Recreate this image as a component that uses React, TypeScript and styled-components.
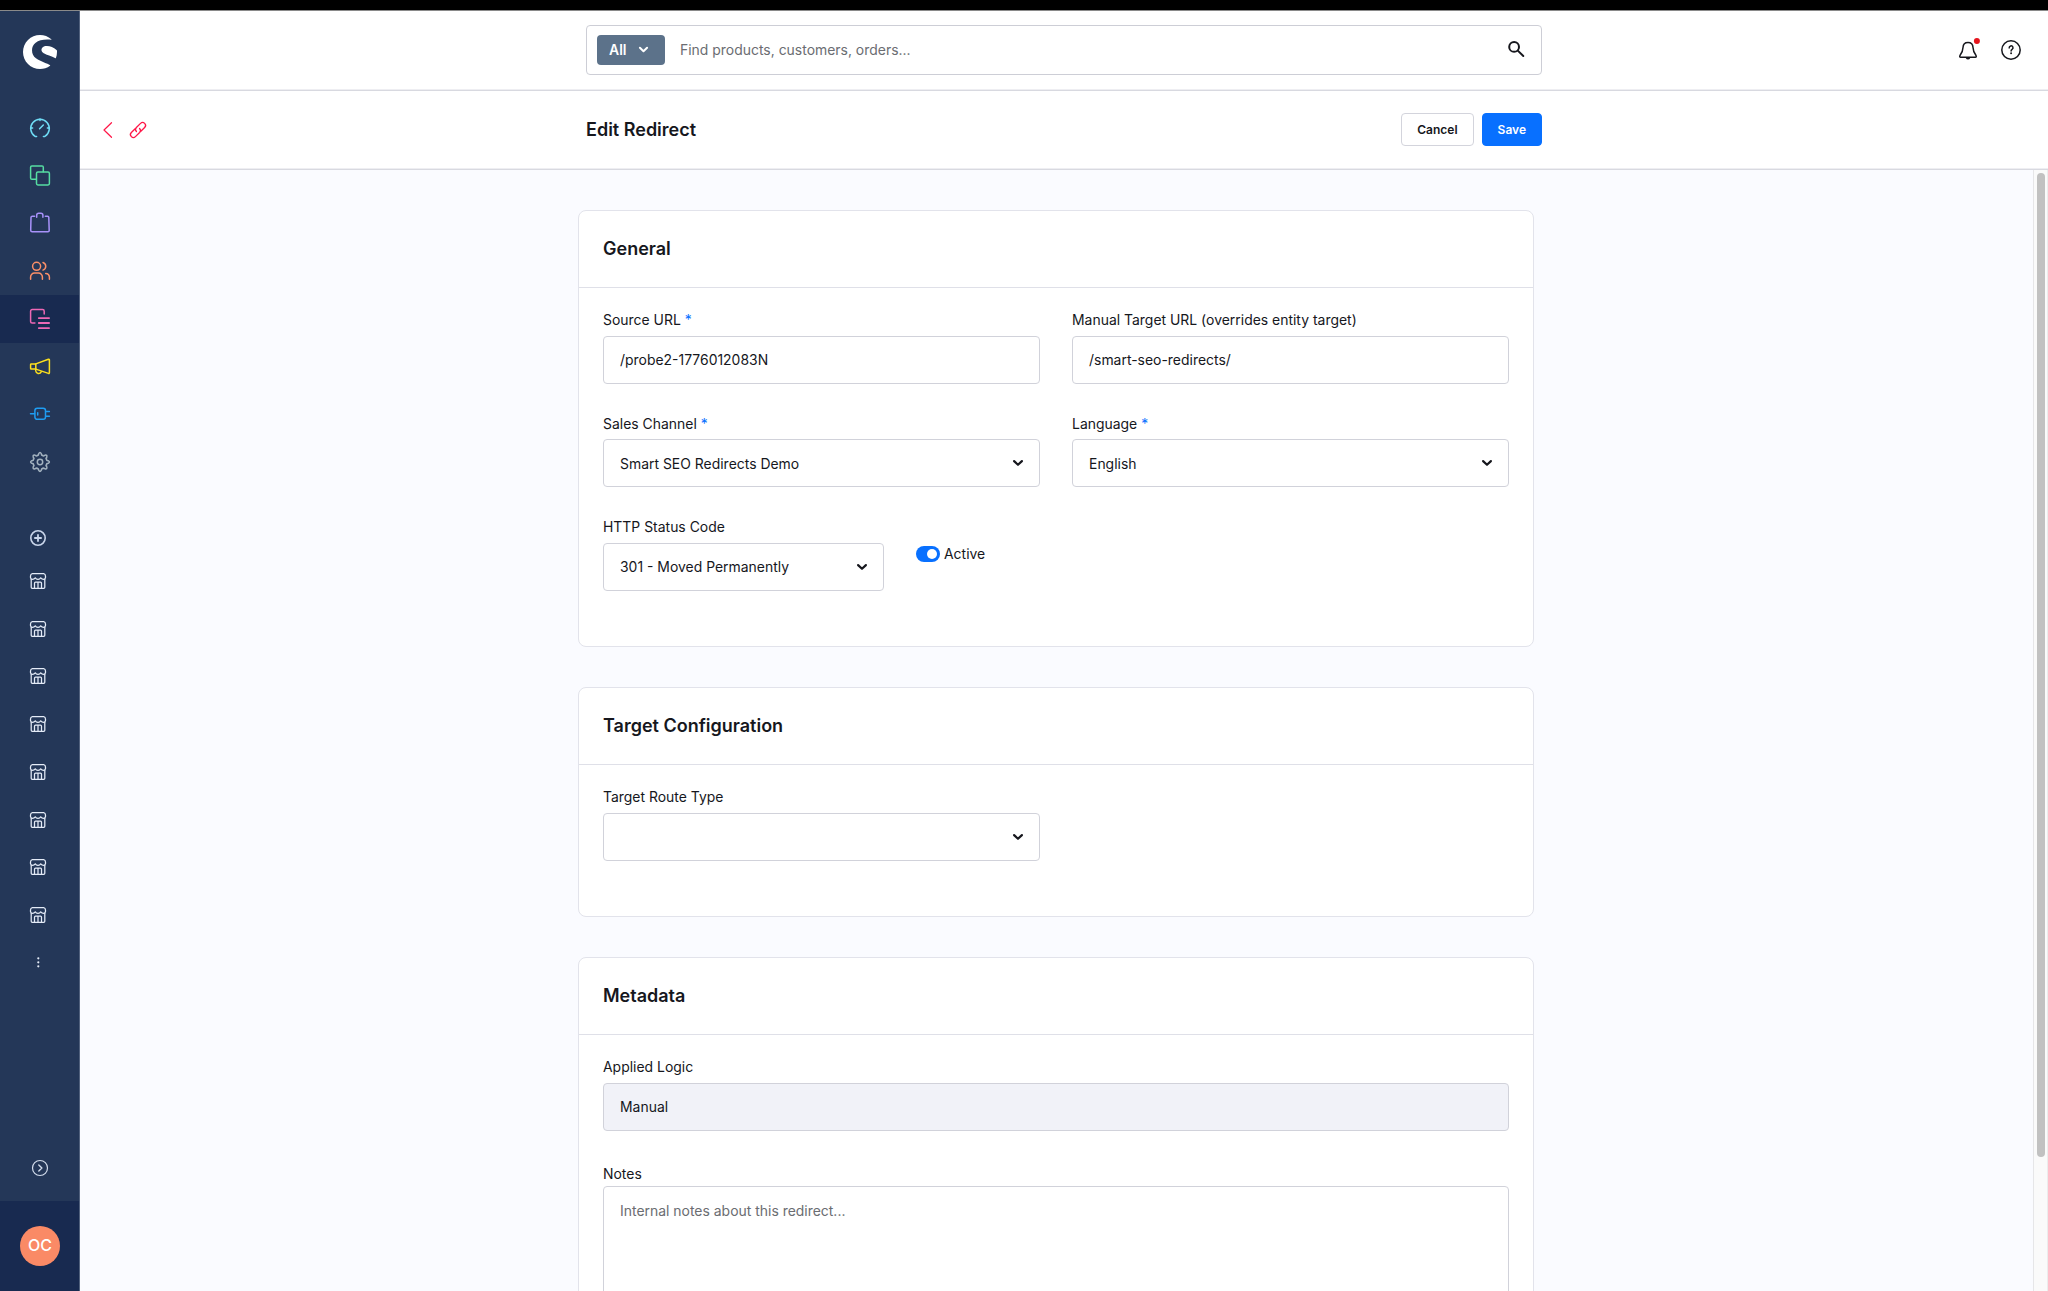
import React from 'react';
import styled, { createGlobalStyle } from 'styled-components';
import { SiShopware } from 'react-icons/si';

const GlobalStyle = createGlobalStyle`
  *, *::before, *::after { box-sizing: border-box; }
  body {
    margin: 0;
    background: #fff;
    color: #16171d;
    font-family: Inter, "Liberation Sans", sans-serif;
    font-size: 13.95px;
    overflow: hidden;
    -webkit-font-smoothing: antialiased;
  }
  button, input, textarea { font: inherit; color: inherit; }
`;

const Screen = styled.div`
  display: flex;
  flex-direction: column;
  width: 2048px;
  height: 1291px;
  border-top: 10px solid #000;
  overflow: hidden;
`;

const Shell = styled.div`
  flex: 1;
  min-height: 0;
  display: flex;
  border-top: 1px solid #8a8a8a;
`;

const Sidebar = styled.aside`
  width: 80px;
  flex: none;
  display: flex;
  flex-direction: column;
  background: #243758;
  border-right: 1px solid #51617d;
`;

const Brand = styled.div`
  height: 93.1px;
  padding: 23.5px 0 0 23px;
  color: #fff;
  line-height: 0;
`;

const NavList = styled.nav`
  display: flex;
  flex-direction: column;
`;

const NavItem = styled.a<{ $color: string; $active?: boolean }>`
  height: 47.75px;
  padding: 13.9px 0 0 30px;
  line-height: 0;
  color: ${(p) => p.$color};
  background: ${(p) => (p.$active ? '#182a50' : 'transparent')};
`;

const ChannelList = styled.div`
  display: flex;
  flex-direction: column;
  padding: 43.8px 0 0 30px;
  color: #e4ebf7;
  line-height: 0;
`;

const ChannelHead = styled.div`
  height: 43px;
  color: #c9d5ea;
`;

const ChannelItem = styled.div`
  height: 47.75px;
`;

const Expand = styled.div`
  margin-top: auto;
  height: 41px;
  padding-left: 32px;
  color: #d3dcec;
  line-height: 0;
`;

const UserPanel = styled.div`
  height: 90px;
  flex: none;
  display: flex;
  align-items: center;
  justify-content: center;
  padding-left: 1px;
  background: #182a50;
`;

const Avatar = styled.div`
  width: 40px;
  height: 40px;
  border-radius: 50%;
  display: flex;
  align-items: center;
  justify-content: center;
  background: #fa8a66;
  color: #fff;
  font-size: 16px;
  font-weight: 500;
  line-height: 38px;
  padding-bottom: 2px;
`;

const Main = styled.main`
  flex: 1;
  min-width: 0;
  display: flex;
  flex-direction: column;
`;

const Bar = styled.header<{ $height: number }>`
  height: ${(p) => p.$height}px;
  flex: none;
  display: grid;
  grid-template-columns: 1fr 956px 1fr;
  align-items: center;
  background: #fff;
  border-bottom: 1px solid #d8d9e0;
  box-shadow: inset 0 -1px 0 #eeeef2;
`;

const SearchBox = styled.div`
  height: 50px;
  display: flex;
  align-items: center;
  margin-top: -2px;
  padding: 0 17px 0 10px;
  border: 1px solid #cdced6;
  border-radius: 4px;
`;

const SearchType = styled.button`
  width: 68px;
  height: 30px;
  display: flex;
  align-items: center;
  padding: 0 0 0 12px;
  border: 0;
  border-radius: 4px;
  background: #5c728a;
  color: #fff;
  font-weight: 600;
  gap: 12px;
`;

const SearchInput = styled.input`
  flex: 1;
  border: 0;
  outline: 0;
  padding: 0 0 0 15px;
  &::placeholder { color: #6b6d72; opacity: 1; }
`;

const SearchGlyph = styled.span`
  line-height: 0;
  padding-bottom: 1px;
`;

const Tools = styled.div`
  display: flex;
  justify-content: flex-end;
  align-items: center;
  gap: 23.5px;
  padding: 0 27px 1px 0;
  line-height: 0;
`;

const BackLinks = styled.div`
  display: flex;
  align-items: center;
  gap: 10.5px;
  padding: 0 0 1px 23px;
  color: #ff1748;
  line-height: 0;
`;

const TitleRow = styled.div`
  display: flex;
  align-items: center;
  gap: 8px;
  padding-bottom: 1px;
`;

const Title = styled.h2`
  flex: 1;
  margin: 0;
  padding-bottom: 1px;
  font-size: 18px;
  font-weight: 600;
`;

const Button = styled.button<{ $primary?: boolean }>`
  height: 33px;
  padding: 0 15px;
  border-radius: 4px;
  border: 1px solid ${(p) => (p.$primary ? '#0870ff' : '#d3d4dc')};
  background: ${(p) => (p.$primary ? '#0870ff' : '#fff')};
  color: ${(p) => (p.$primary ? '#fff' : '#16171d')};
  font-size: 12px;
  font-weight: 600;
`;

const Body = styled.div`
  flex: 1;
  min-height: 0;
  display: flex;
  background: #fafbff;
`;

const Content = styled.div`
  flex: 1;
  display: flex;
  flex-direction: column;
  align-items: center;
  gap: 40px;
  padding: 40px 1px 0 0;
  overflow: hidden;
`;

const Track = styled.div`
  width: 15px;
  flex: none;
  padding: 3px 0 0 3px;
  background: #fafafa;
  border-left: 1px solid #e6e6e8;
  border-right: 1px solid #ececec;
`;

const Thumb = styled.div`
  width: 8px;
  height: 984px;
  border-radius: 4px;
  background: #c1c1c1;
`;

const Card = styled.section<{ $height: number }>`
  width: 956px;
  height: ${(p) => p.$height}px;
  flex: none;
  background: #fff;
  border: 1px solid #e2e3eb;
  border-radius: 8px;
`;

const CardTitle = styled.h3`
  height: 77px;
  margin: 0;
  padding: 0 24px;
  border-bottom: 1px solid #dfe0e8;
  font-size: 18px;
  font-weight: 600;
  line-height: 76px;
`;

const CardBody = styled.div<{ $gap?: number }>`
  display: flex;
  flex-direction: column;
  gap: ${(p) => p.$gap ?? 32}px;
  padding: 24px 24px 0;
`;

const Row = styled.div<{ $columns: string }>`
  display: grid;
  grid-template-columns: ${(p) => p.$columns};
  column-gap: 32px;
`;

const Field = styled.div<{ $gap?: number }>`
  display: flex;
  flex-direction: column;
  gap: ${(p) => p.$gap ?? 7.7}px;
`;

const Label = styled.label`
  height: 16px;
  line-height: 16px;
  white-space: nowrap;
`;

const Required = styled.span`
  margin-left: 4px;
  color: #0870ff;
`;

const Control = styled.div<{ $disabled?: boolean }>`
  height: 47.9px;
  display: flex;
  align-items: center;
  justify-content: space-between;
  padding: 0 15px 0 16px;
  border: 1px solid #d1d2da;
  border-radius: 4px;
  background: ${(p) => (p.$disabled ? '#f1f2f8' : '#fff')};
`;

const Notes = styled.textarea`
  height: 160px;
  padding: 15px 16px;
  border: 1px solid #d1d2da;
  border-radius: 4px;
  resize: none;
  outline: 0;
  line-height: 17px;
  &::placeholder { color: #6b6d72; opacity: 1; }
`;

const SwitchRow = styled.div`
  display: flex;
  align-items: center;
  gap: 4px;
  height: 16px;
  margin-top: 26.500px;
`;

const Switch = styled.span`
  width: 24px;
  height: 16px;
  display: flex;
  justify-content: flex-end;
  align-items: center;
  padding-right: 3px;
  border-radius: 8px;
  background: #0870ff;
  &::after {
    content: '';
    width: 10px;
    height: 10px;
    border-radius: 50%;
    background: #fff;
  }
`;

type IconProps = { size?: number; box?: string; stroke?: number; children: React.ReactNode };
const Icon = ({ size = 20, box, stroke = 1.5, children }: IconProps) => (
  <svg
    width={size}
    height={size}
    viewBox={box ?? `0 0 ${size} ${size}`}
    fill="none"
    stroke="currentColor"
    strokeWidth={stroke}
    strokeLinecap="round"
    strokeLinejoin="round"
    overflow="visible"
  >
    {children}
  </svg>
);

const Chevron = ({ size = 12 }: { size?: number }) => (
  <Icon size={size} box="0 0 12 12" stroke={2.2}>
    <path d="M2.1 4.1 6 7.8l3.9-3.7" />
  </Icon>
);

const gearPath = (() => {
  const points: string[] = [];
  const at = (r: number, deg: number) => {
    const a = ((deg - 90) * Math.PI) / 180;
    return `${(10 + r * Math.cos(a)).toFixed(2)} ${(10 + r * Math.sin(a)).toFixed(2)}`;
  };
  for (let i = 0; i < 8; i += 1) {
    const c = i * 45;
    points.push(`${i ? 'L' : 'M'}${at(8.3, c - 9.5)}Q${at(10.6, c)} ${at(8.3, c + 9.5)}`);
    points.push(`Q${at(6.1, c + 14)} ${at(7.3, c + 22.5)}Q${at(6.1, c + 31)} ${at(8.3, c + 35.5)}`);
  }
  return `${points.join('')}Z`;
})();

const navItems = [
  {
    color: '#6fdcf5',
    art: (
      <>
        <path d="M6.6 18.4H5.1A9.3 9.3 0 1 1 14.9 18.4H13.4" />
        <path d="M10 1v1.4M1 10h1.6M17.4 10H19M9.6 10.8l3.7-3.8" />
      </>
    ),
  },
  {
    color: '#56dda2',
    art: (
      <>
        <path d="M6 13.2H1.9A1.3 1.3 0 0 1 .6 11.9V1.2A1.3 1.3 0 0 1 1.9-.1H12A1.3 1.3 0 0 1 13.3 1.2V5.8" />
        <rect x="6.5" y="6" width="12.9" height="12.9" rx="1.4" />
      </>
    ),
  },
  {
    color: '#a892fa',
    art: (
      <>
        <path d="M4.6 3.2H2.3Q1.1 3.2 1 4.4L.7 17.2Q.7 18.7 2.1 18.7H17.9Q19.3 18.7 19.2 17.2L18.8 4.4Q18.7 3.2 17.5 3.2H15.3" />
        <path d="M6.7 4.2V2.2A2 2 0 0 1 8.7.2H10.9A2 2 0 0 1 12.9 2.2V4.2" />
      </>
    ),
  },
  {
    color: '#fb8f68',
    art: (
      <>
        <circle cx="6.6" cy="5.3" r="4" />
        <path d="M.6 18.3V16A3.9 3.9 0 0 1 4.5 12.1H8.5A3.9 3.9 0 0 1 12.4 16V18.3M13 1.5A4 4 0 0 1 13 9.1M15.7 12.4A3.8 3.8 0 0 1 19.4 16V18.3" />
      </>
    ),
  },
  {
    color: '#ee68b5',
    active: true,
    art: (
      <>
        <path d="M4.9 14H2.2A1.6 1.6 0 0 1 .6 12.4V2.2A1.6 1.6 0 0 1 2.2.6H12.6A1.6 1.6 0 0 1 14.2 2.2V5" />
        <path strokeWidth="1.8" d="M8.8 9.1H19.1M8.8 14H19.1M8.8 19.1H19.1" />
      </>
    ),
  },
  {
    color: '#fbdf1e',
    art: (
      <>
        <path d="M5.8 6.9H1.2Q.6 6.9.6 7.5V11.5Q.6 12.1 1.2 12.1H5.8" />
        <path d="M5.8 6.9 18.4 2.3Q19.4 2.1 19.4 3.1V15.6Q19.4 16.6 18.4 16.4L5.8 12.1Z" />
        <path d="M5.7 12.3V13.8A2.9 2.9 0 0 0 11.2 14.8" />
      </>
    ),
  },
  {
    color: '#1f9df2',
    art: (
      <>
        <rect x="4.9" y="4.3" width="10.6" height="11" rx="2.3" />
        <path d="M.5 9.8H4.5M15.8 7.4H19.4M15.8 12.2H19.4M7.7 8.7V10.9" />
      </>
    ),
  },
  {
    color: '#a3b2bf',
    art: (
      <>
        <path d={gearPath} />
        <circle cx="10" cy="10" r="2.7" />
      </>
    ),
  },
];

const StoreIcon = () => (
  <Icon size={16} stroke={1.25}>
    <path d="M2.3.6H13.7Q15.4.8 15.5 3V4.6Q15.3 6.3 13.3 6.4 11.3 6.2 10.7 4.8 9.9 6.3 8 6.4 6.1 6.3 5.3 4.8 4.7 6.2 2.7 6.4.7 6.3.5 4.6V3Q.6.8 2.3.6Z" />
    <path d="M1.2 6.3V14.3Q1.2 15.4 2.3 15.4H13.7Q14.8 15.4 14.8 14.3V6.3M4.5 15.2V10.2Q4.5 9.2 5.5 9.2H10.5Q11.5 9.2 11.5 10.2V15.2M8 9.4V15.2" />
  </Icon>
);

type FieldProps = { label: string; value?: string; required?: boolean; select?: boolean; disabled?: boolean };
const FormField = ({ label, value, required, select, disabled }: FieldProps) => (
  <Field>
    <Label>
      {label}
      {required && <Required>*</Required>}
    </Label>
    <Control $disabled={disabled}>
      <span>{value}</span>
      {select && <Chevron />}
    </Control>
  </Field>
);

export default function App() {
  return (
    <Screen>
      <GlobalStyle />
      <Shell>
        <Sidebar>
          <Brand>
            <SiShopware size={34} />
          </Brand>
          <NavList>
            {navItems.map((item) => (
              <NavItem key={item.color} $color={item.color} $active={item.active}>
                <Icon>{item.art}</Icon>
              </NavItem>
            ))}
          </NavList>
          <ChannelList>
            <ChannelHead>
              <Icon size={16} stroke={1.6}>
                <circle cx="8" cy="8" r="7.2" />
                <path strokeWidth="1.8" d="M8 4.9V11.1M4.9 8H11.1" />
              </Icon>
            </ChannelHead>
            {Array.from({ length: 8 }, (_, i) => (
              <ChannelItem key={i}>
                <StoreIcon />
              </ChannelItem>
            ))}
            <Icon size={16}>
              <g fill="currentColor" stroke="none">
                <circle cx="8.3" cy="3.3" r="1.1" />
                <circle cx="8.3" cy="7.3" r="1.1" />
                <circle cx="8.3" cy="11.3" r="1.1" />
              </g>
            </Icon>
          </ChannelList>
          <Expand>
            <Icon size={16} stroke={1.2}>
              <circle cx="8" cy="8" r="7.5" />
              <path strokeWidth="1.4" d="M6.8 5 9.9 8 6.8 11" />
            </Icon>
          </Expand>
          <UserPanel>
            <Avatar>OC</Avatar>
          </UserPanel>
        </Sidebar>

        <Main>
          <Bar $height={80}>
            <span />
            <SearchBox>
              <SearchType>
                All
                <Chevron size={11} />
              </SearchType>
              <SearchInput placeholder="Find products, customers, orders..." />
              <SearchGlyph>
                <Icon size={16} stroke={2}>
                  <circle cx="6.1" cy="5.9" r="4.9" />
                  <path d="M9.8 9.6 15.3 15" />
                </Icon>
              </SearchGlyph>
            </SearchBox>
            <Tools>
              <Icon size={20} stroke={1.5}>
                <path d="M10 2.4C7 2.4 5.1 4.6 5 7.6 4.9 11.3 4.2 12.6 2.1 15.300 1.400 16.500 1.700 17.300 2.700 17.300H17.300C18.300 17.300 18.600 16.500 17.900 15.300 15.800 12.600 15.100 11.300 15 7.600 14.900 4.600 13 2.400 10 2.400Z" />
                <path d="M8.600 17.900A1.500 1.500 0 0 0 11.400 17.900Z" fill="currentColor" />
                <circle cx="18.900" cy="1" r="3" fill="#e5141c" stroke="none" />
              </Icon>
              <Icon size={20} stroke={1.5}>
                <circle cx="10" cy="10" r="9.2" />
                <path d="M8.200 7.900A1.900 1.900 0 1 1 11.100 9.400Q10.100 10 10.100 10.900" />
                <circle cx="10.100" cy="13.300" r=".95" fill="currentColor" stroke="none" />
              </Icon>
            </Tools>
          </Bar>

          <Bar $height={79}>
            <BackLinks>
              <Icon size={16} stroke={1.2}>
                <path d="M8.5.7 1 8 8.500 15.300" />
              </Icon>
              <Icon size={16} stroke={1.3}>
                <g transform="rotate(-45 8 8)">
                  <path d="M6.500 5.100H1.500A2.900 2.900 0 0 0 1.500 10.900H7.400A2.900 2.900 0 0 0 10.200 8" />
                  <path d="M9.500 10.900H14.500A2.900 2.900 0 0 0 14.500 5.100H8.600A2.900 2.900 0 0 0 5.800 8" />
                </g>
              </Icon>
            </BackLinks>
            <TitleRow>
              <Title>Edit Redirect</Title>
              <Button>Cancel</Button>
              <Button $primary>Save</Button>
            </TitleRow>
          </Bar>

          <Body>
            <Content>
              <Card $height={437}>
                <CardTitle>General</CardTitle>
                <CardBody>
                  <Row $columns="1fr 1fr">
                    <FormField label="Source URL" value="/probe2-1776012083N" required />
                    <FormField label="Manual Target URL (overrides entity target)" value="/smart-seo-redirects/" />
                  </Row>
                  <Row $columns="1fr 1fr">
                    <FormField label="Sales Channel" value="Smart SEO Redirects Demo" required select />
                    <FormField label="Language" value="English" required select />
                  </Row>
                  <Row $columns="281px 1fr">
                    <FormField label="HTTP Status Code" value="301 - Moved Permanently" select />
                    <SwitchRow>
                      <Switch />
                      Active
                    </SwitchRow>
                  </Row>
                </CardBody>
              </Card>

              <Card $height={230}>
                <CardTitle>Target Configuration</CardTitle>
                <CardBody>
                  <Row $columns="1fr 1fr">
                    <FormField label="Target Route Type" select />
                  </Row>
                </CardBody>
              </Card>

              <Card $height={420}>
                <CardTitle>Metadata</CardTitle>
                <CardBody $gap={35}>
                  <FormField label="Applied Logic" value="Manual" disabled />
                  <Field $gap={4}>
                    <Label>Notes</Label>
                    <Notes placeholder="Internal notes about this redirect..." />
                  </Field>
                </CardBody>
              </Card>
            </Content>
            <Track>
              <Thumb />
            </Track>
          </Body>
        </Main>
      </Shell>
    </Screen>
  );
}
